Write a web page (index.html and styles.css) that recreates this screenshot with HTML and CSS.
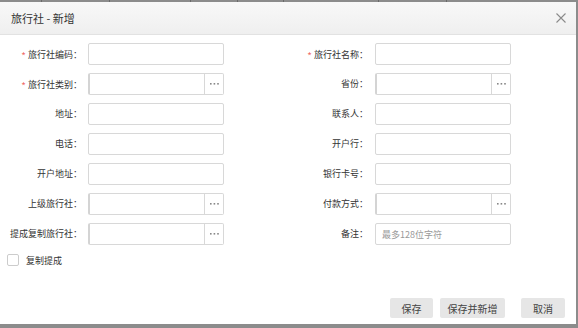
FILE: index.html
```html
<!DOCTYPE html>
<html lang="zh">
<head>
<meta charset="utf-8">
<title>旅行社 - 新增</title>
<link rel="stylesheet" href="styles.css">
</head>
<body>
<div class="topstrip">
  <span class="sep s1"></span><span class="sep s2"></span><span class="sep s3"></span><span class="sep s4"></span><span class="sep s5"></span><span class="sep s6"></span><span class="sep s7"></span>
</div>
<div class="dialog">
  <div class="header">
    <span class="title">旅行社 - 新增</span>
    <svg class="close" width="10" height="10" viewBox="0 0 10 10"><path d="M0.5 0.5L9.5 9.5M9.5 0.5L0.5 9.5" stroke="#8a8a8a" stroke-width="1.1"/></svg>
  </div>
  <div class="body">
    <div class="row">
      <label class="lbl lbl-l"><span class="req">*</span>旅行社编码：</label>
      <div class="field"></div>
      <label class="lbl lbl-r"><span class="req">*</span>旅行社名称：</label>
      <div class="field"></div>
    </div>
    <div class="row">
      <label class="lbl lbl-l"><span class="req">*</span>旅行社类别：</label>
      <div class="field pick"><span class="pick-in"></span><span class="pick-btn"><svg width="9" height="2" viewBox="0 0 9 2"><rect x="0" y="0" width="1.6" height="1.6" fill="#888"/><rect x="3.6" y="0" width="1.6" height="1.6" fill="#888"/><rect x="7.2" y="0" width="1.6" height="1.6" fill="#888"/></svg></span></div>
      <label class="lbl lbl-r">省份：</label>
      <div class="field pick"><span class="pick-in"></span><span class="pick-btn"><svg width="9" height="2" viewBox="0 0 9 2"><rect x="0" y="0" width="1.6" height="1.6" fill="#888"/><rect x="3.6" y="0" width="1.6" height="1.6" fill="#888"/><rect x="7.2" y="0" width="1.6" height="1.6" fill="#888"/></svg></span></div>
    </div>
    <div class="row">
      <label class="lbl lbl-l">地址：</label>
      <div class="field"></div>
      <label class="lbl lbl-r">联系人：</label>
      <div class="field"></div>
    </div>
    <div class="row">
      <label class="lbl lbl-l">电话：</label>
      <div class="field"></div>
      <label class="lbl lbl-r">开户行：</label>
      <div class="field"></div>
    </div>
    <div class="row">
      <label class="lbl lbl-l">开户地址：</label>
      <div class="field"></div>
      <label class="lbl lbl-r">银行卡号：</label>
      <div class="field"></div>
    </div>
    <div class="row">
      <label class="lbl lbl-l">上级旅行社：</label>
      <div class="field pick"><span class="pick-in"></span><span class="pick-btn"><svg width="9" height="2" viewBox="0 0 9 2"><rect x="0" y="0" width="1.6" height="1.6" fill="#888"/><rect x="3.6" y="0" width="1.6" height="1.6" fill="#888"/><rect x="7.2" y="0" width="1.6" height="1.6" fill="#888"/></svg></span></div>
      <label class="lbl lbl-r">付款方式：</label>
      <div class="field pick"><span class="pick-in"></span><span class="pick-btn"><svg width="9" height="2" viewBox="0 0 9 2"><rect x="0" y="0" width="1.6" height="1.6" fill="#888"/><rect x="3.6" y="0" width="1.6" height="1.6" fill="#888"/><rect x="7.2" y="0" width="1.6" height="1.6" fill="#888"/></svg></span></div>
    </div>
    <div class="row">
      <label class="lbl lbl-l">提成复制旅行社：</label>
      <div class="field pick"><span class="pick-in"></span><span class="pick-btn"><svg width="9" height="2" viewBox="0 0 9 2"><rect x="0" y="0" width="1.6" height="1.6" fill="#888"/><rect x="3.6" y="0" width="1.6" height="1.6" fill="#888"/><rect x="7.2" y="0" width="1.6" height="1.6" fill="#888"/></svg></span></div>
      <label class="lbl lbl-r">备注：</label>
      <div class="field"><span class="ph">最多128位字符</span></div>
    </div>
    <div class="check-row">
      <span class="checkbox"></span>
      <span class="check-lbl">复制提成</span>
    </div>
  </div>
  <div class="footer">
    <button class="btn">保存</button>
    <button class="btn btn-wide">保存并新增</button>
    <button class="btn btn-cancel">取消</button>
  </div>
</div>
</body>
</html>
```
FILE: styles.css
```css
html, body {
  margin: 0;
  padding: 0;
}
body {
  background: #8c8c8c;
  width: 578px;
  height: 328px;
  overflow: hidden;
  font-family: "Noto Sans CJK SC", "Noto Sans", sans-serif;
  color: #333;
}
.topstrip {
  height: 2px;
  position: relative;
}
.sep {
  position: absolute;
  top: 0;
  width: 1px;
  height: 2px;
  background: #6a6a6a;
}
.s1 { left: 41px; }
.s2 { left: 109px; }
.s3 { left: 190px; }
.s4 { left: 237px; }
.s5 { left: 283px; }
.s6 { left: 378px; }
.s7 { left: 446px; }
.dialog {
  width: 576px;
  height: 322px;
  background: #fff;
  display: flex;
  flex-direction: column;
}
.header {
  height: 33px;
  box-sizing: border-box;
  background: linear-gradient(#f8f8f8, #efefef);
  border-bottom: 1px solid #e2e2e2;
  display: flex;
  align-items: center;
  justify-content: space-between;
  padding: 0 10px 0 11px;
}
.title {
  font-size: 11px;
  color: #333;
  line-height: 1;
}
.close {
  display: block;
}
.body {
  padding-top: 8px;
  flex: 1;
}
.row {
  display: flex;
  align-items: center;
  height: 22px;
  margin-bottom: 8px;
}
.lbl {
  font-size: 9px;
  color: #333;
  text-align: right;
  line-height: 22px;
  white-space: nowrap;
}
.lbl-l {
  width: 82px;
  margin-right: 6px;
}
.lbl-r {
  width: 144px;
  margin-right: 7px;
}
.req {
  color: #f06b6b;
  font-size: 10px;
  margin-right: 2px;
  position: relative;
  top: 2px;
}
.field {
  width: 136px;
  height: 22px;
  box-sizing: border-box;
  border: 1px solid #d8d8d8;
  border-radius: 2px;
  background: #fff;
  display: flex;
  align-items: center;
}
.pick {
  border-left: 2px solid #d4d4d4;
}
.pick-in {
  flex: 1;
  height: 100%;
}
.pick-btn {
  width: 18px;
  height: 100%;
  border-left: 1px solid #d8d8d8;
  display: flex;
  align-items: center;
  justify-content: center;
}
.pick-btn svg {
  display: block;
}
.ph {
  font-size: 9px;
  color: #999;
  padding-left: 6px;
}
.check-row {
  display: flex;
  align-items: center;
  margin-top: 8px;
  padding-left: 7px;
  height: 14px;
}
.checkbox {
  width: 12px;
  height: 12px;
  box-sizing: border-box;
  border: 1px solid #ccc;
  border-radius: 2px;
  background: #fff;
}
.check-lbl {
  font-size: 9px;
  color: #333;
  margin-left: 7px;
}
.footer {
  display: flex;
  justify-content: flex-end;
  padding: 0 11px 6px 0;
}
.btn {
  height: 20px;
  border: none;
  border-radius: 2px;
  background: #e6e6e6;
  font-family: "Noto Sans CJK SC", "Noto Sans", sans-serif;
  font-size: 10px;
  color: #444;
  padding: 0;
  width: 43px;
  margin-left: 7px;
}
.btn-wide {
  width: 65px;
}
.btn-cancel {
  width: 44px;
  margin-left: 16px;
}
```
